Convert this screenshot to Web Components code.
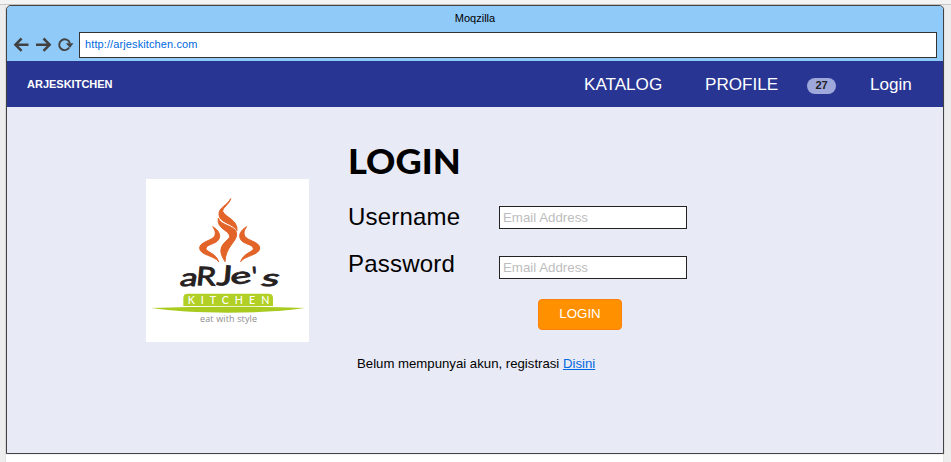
<!DOCTYPE html>
<html lang="id"><head><meta charset="utf-8"><title>Arjeskitchen</title>
<style>
html,body{margin:0;height:100%;overflow:hidden}
body{background:#fff;font-family:"Liberation Sans",Arial,sans-serif;color:#000}
</style></head><body>
<canvas-frame>
 <browser-window heading="Moqzilla" url="http://arjeskitchen.com">
  <site-nav brand="ARJESKITCHEN">
   <nav-item style="width:121px">KATALOG</nav-item><nav-item style="width:102px">PROFILE</nav-item><count-badge>27</count-badge><nav-item>Login</nav-item>
  </site-nav>
  <login-panel>
   <kitchen-logo slot="logo"></kitchen-logo>
   <form-row label="Username" hint="Email Address"></form-row>
   <form-row label="Password" hint="Email Address" style="--drop:3px"></form-row>
  </login-panel>
 </browser-window>
</canvas-frame>
<script>
const define=(name,render)=>customElements.define(name,class extends HTMLElement{
  constructor(){super();this.attachShadow({mode:'open'})}
  connectedCallback(){this.shadowRoot.innerHTML=render(this)}
});
define('canvas-frame',()=>`<style>
:host{display:block;box-sizing:border-box;width:951px;height:462px;border-top:4px solid #f3f3f3;background:linear-gradient(#c9c9c9,#c9c9c9) 0 0/100% 1px no-repeat,linear-gradient(90deg,#ededed 5px,#e2e2e2 5px 6px,#fff 6px 943px,#e6e6e6 943px 944px,#ededed 944px);padding:1px 0 0 6px}
</style><slot></slot>`);
define('browser-window',e=>`<style>
:host{display:flex;flex-direction:column;box-sizing:border-box;width:938px;height:449px;border:1px solid #424242;border-radius:5px 5px 0 0;background:#e8eaf6;overflow:hidden;box-shadow:0 0 1px #777}
header{background:#90caf9;height:55px;flex:none;display:flex;flex-direction:column}
.t{font-size:11px;line-height:13px;padding-top:6px;height:20px;box-sizing:border-box;text-align:center}
.b{display:flex;align-items:center;padding:6px 6px 0 6px}
svg{width:66px;height:24px;flex:none}
.u{box-sizing:border-box;flex:1;height:26px;border:1px solid #333;background:#fff;color:#0069e0;font-size:11px;line-height:23px;padding-left:5px;letter-spacing:.11px}
</style><header><div class="t">${e.getAttribute('heading')}</div><div class="b">
<svg viewBox="13 32 66 24" fill="none" stroke="#424242" stroke-width="2.5"><path d="M28.5 43.7H16M21.6 37.5l-6.2 6.2 6.2 6.2M36 43.7h13M43.5 37.5l6.2 6.2-6.2 6.2"/><path stroke-width="1.9" d="M69.2 46.6a5.4 5.4 0 1 1 .6-4.4"/><path fill="#424242" stroke="none" d="M65.8 42.3h7.6l-3.3 4.4z"/></svg>
<div class="u">${e.getAttribute('url')}</div></div></header><slot></slot>`);
define('site-nav',e=>`<style>
:host{display:flex;box-sizing:border-box;height:46px;flex:none;background:#283593;color:#fff;padding-left:20px}
b{font-size:11px;line-height:46px;width:557px}
nav{display:flex;align-items:flex-start}
</style><b>${e.getAttribute('brand')}</b><nav><slot></slot></nav>`);
define('nav-item',()=>`<style>:host{display:block;font-size:17.1px;line-height:48px;height:46px}</style><slot></slot>`);
define('count-badge',()=>`<style>:host{display:block;box-sizing:border-box;margin:17px 34px 0 0;width:29px;height:16px;border-radius:8px;background:#9fa8da;color:#212121;font:bold 11px/15px "Liberation Sans",sans-serif;text-align:center}</style><slot></slot>`);
define('form-row',e=>`<style>
:host{display:grid;grid-template-columns:151px 188px;height:47px;align-items:start}
label{font-size:24px;line-height:28px;letter-spacing:.2px}
div{box-sizing:border-box;width:188px;height:23px;margin-top:calc(3px + var(--drop,0px));border:1px solid #222;background:#fff;color:#bdbdbd;font-size:13.3px;line-height:21px;padding-left:3px}
</style><label>${e.getAttribute('label')}</label><div>${e.getAttribute('hint')}</div>`);
define('login-panel',()=>`<style>
:host{display:grid;grid-template-columns:163px 340px;column-gap:39px;padding-left:139px;align-items:start}
slot[name=logo]{display:block;padding-top:72px}
h1{margin:33px 0 0;font:900 34.5px/42px Lato,"Open Sans",sans-serif;height:63px;width:max-content;transform:scaleX(1.05);transform-origin:0 0}
button{display:block;margin:2px 0 0 190px;width:84px;height:31px;border:1px solid #ff7f0e;border-radius:4px;background:#ff9100;color:#fff;font:13.3px/15px "Liberation Sans",sans-serif;padding:0 6px 2px}
p{margin:25px 0 0 9px;font-size:13.2px;line-height:17px;white-space:nowrap}
a{color:#0069e0;text-decoration:underline}
</style><slot name="logo"></slot><section><h1>LOGIN</h1><slot></slot><button>LOGIN</button><p>Belum mempunyai akun, registrasi <a>Disini</a></p></section>`);
define('kitchen-logo',()=>`<style>:host{display:block;width:163px;height:163px;background:#fff}svg{display:block}</style>
<svg width="163" height="163" viewBox="18 21 489 489">
<g fill="#e26428" stroke="#e26428" stroke-width="3" stroke-linejoin="round" transform="translate(105 54)">
<path d="M113 110C130 120 140 135 130 150C122 162 95 163 93 175C93 187 122 188 131 215C118 196 74 196 74 174C74 155 112 152 119 138C123 129 120 119 113 110Z"/>
<path transform="matrix(-1 0 0 1 328 0)" d="M113 110C130 120 140 135 130 150C122 162 95 163 93 175C93 187 122 188 131 215C118 196 74 196 74 174C74 155 112 152 119 138C123 129 120 119 113 110Z"/>
<path d="M167 26C162 44 143 52 143 64C150 82 189 89 186 122C174 99 133 99 132 74C130 52 158 46 167 26Z"/>
<path d="M130 84C136 109 186 106 185 133C184 157 152 170 150 215C142 201 136 191 138 178C141 157 164 149 164 139C162 119 124 118 130 84Z"/></g>
<g fill="#26211f" stroke="#26211f" stroke-width="2.5" font-family="Lato,sans-serif" font-weight="400">
<text transform="translate(117 343) scale(1.42 1) skewX(-8)" font-size="74">a</text>
<text transform="translate(166 339) rotate(2) scale(1.25 1) skewX(-3)" font-size="77">R</text>
<text transform="translate(229 338) rotate(5) scale(1.3 1)" font-size="84">J</text>
<text transform="translate(274 339) rotate(-8) scale(1.75 1)" font-size="68">e</text>
<text transform="translate(339 338) skewX(5)" font-size="76">'</text>
<text transform="translate(359 341) scale(1.75 1) skewX(-10)" font-size="70">s</text></g>
<path fill="#b1cf24" d="M130 402V378Q130 365 143 365H386Q399 365 399 378V402Z"/>
<path fill="#a9cb20" d="M33 408Q150 404 264 404T495 408Q400 422 264 422T33 408Z"/>
<text x="143" y="396" fill="#fff" font-family="Lato,sans-serif" font-size="32" font-weight="500" textLength="245" lengthAdjust="spacing">KITCHEN</text>
<text x="180" y="451" fill="#8d8d8d" font-family="'Open Sans',sans-serif" font-size="27" textLength="171" lengthAdjust="spacing">eat with style</text>
</svg>`);
</script></body></html>
